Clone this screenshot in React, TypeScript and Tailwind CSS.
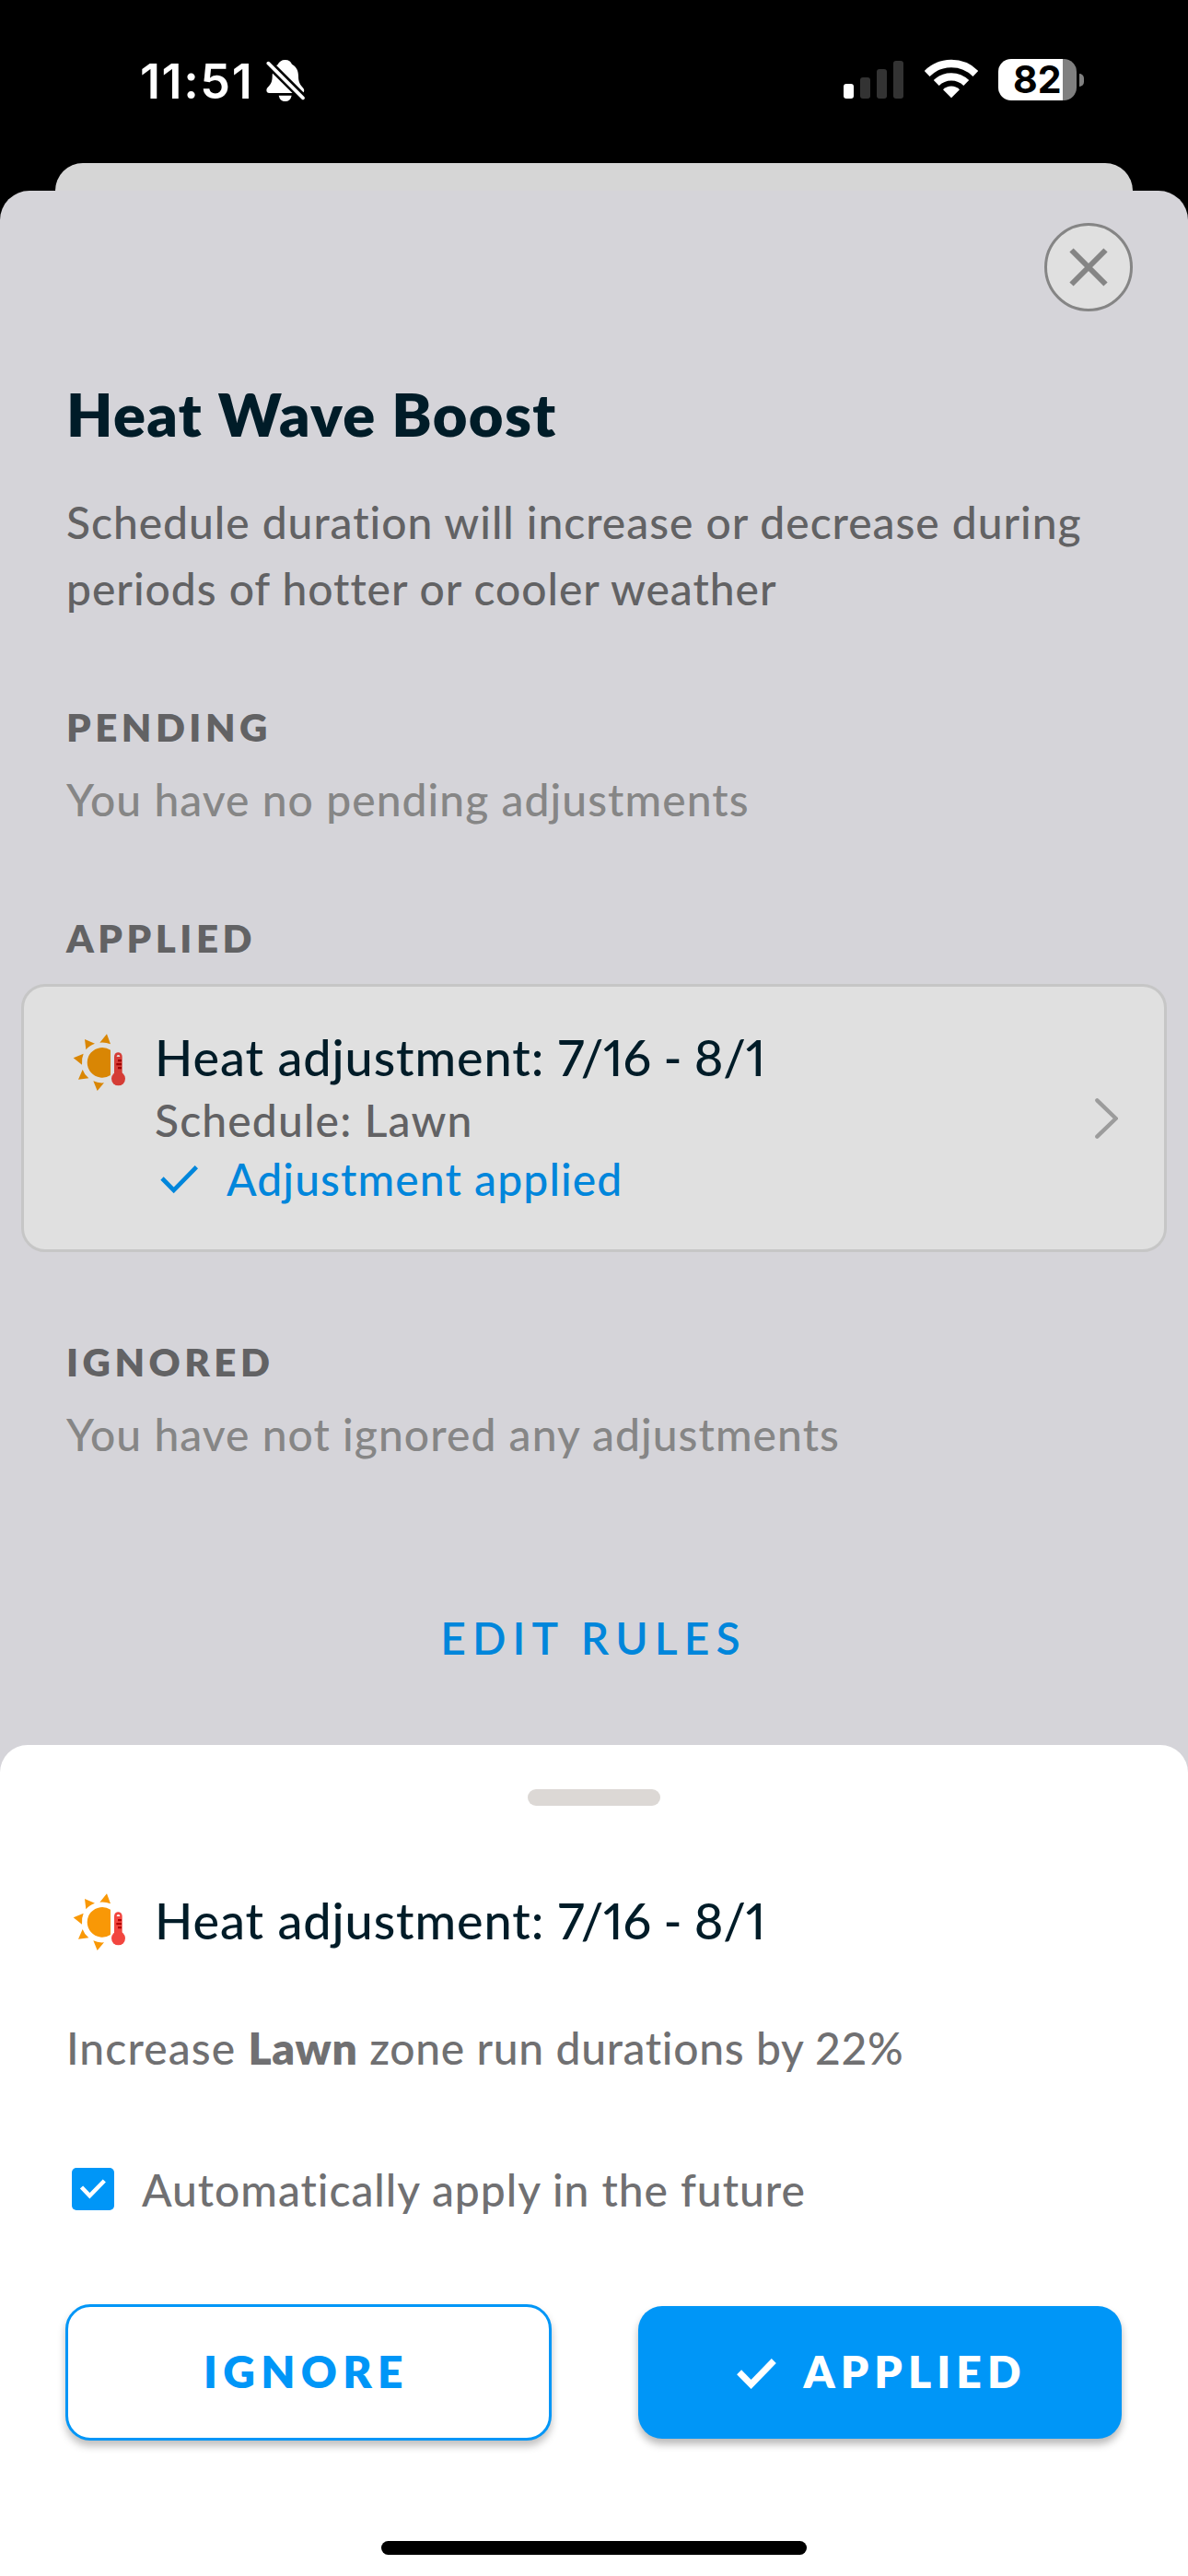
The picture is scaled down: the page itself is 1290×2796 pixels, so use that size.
import type { ReactNode } from "react";

function BellOff() {
  return (
    <svg className="h-[47px] w-[42px]" viewBox="866 74 126 141" fill="white">
      <path d="M928 77C916 77 908 83 904 92C892 100 886 115 886 130C886 150 880 157 870 168C864 176 868 185 876 185H982C990 185 992 176 987 169C977 157 971 150 971 130C971 108 962 98 950 91C946 82 940 77 928 77Z" />
      <path d="M907 193H949Q945 212 928 212Q911 212 907 193Z" />
      <path d="M860 75L1000 214" stroke="black" strokeWidth="27" />
      <path d="M873 88L986 201" stroke="white" strokeWidth="11" strokeLinecap="round" />
    </svg>
  );
}

function Wifi() {
  return (
    <svg className="h-[43px] w-[58px]" viewBox="431 74 174 129" fill="none" stroke="white" strokeWidth="25">
      <path d="M438.800 121.800A112 112 0 0 1 597.200 121.800" />
      <path d="M469.200 152.200A69 69 0 0 1 566.800 152.200" />
      <path d="M518 201L491 174A38.200 38.200 0 0 1 545 174Z" fill="white" stroke="none" />
    </svg>
  );
}

function StatusBar() {
  return (
    <header className="flex h-[177px] items-start justify-between pt-16 pr-[113px] pl-[152px] font-['Inter'] text-white">
      <div className="flex items-start">
        <span className="w-[137px] pt-[2px] text-[52px] leading-[45px] font-semibold tracking-[1.6px]">11:51</span>
        <BellOff />
      </div>
      <div className="flex items-start">
        <div className="flex h-[43px] items-end gap-[7px]">
          <i className="h-4 w-[11px] rounded-[3px] bg-white" />
          <i className="h-[23px] w-[11px] rounded-[3px] bg-[#333333]" />
          <i className="h-8 w-[11px] rounded-[3px] bg-[#333333]" />
          <i className="h-[41px] w-[11px] rounded-[3px] bg-[#333333]" />
        </div>
        <div className="ml-[23px]">
          <Wifi />
        </div>
        <div className="ml-[22px] flex items-center gap-[3px]">
          <div className="flex h-[45px] w-[85px] items-center rounded-[14px] bg-[linear-gradient(90deg,#fff_70px,#808080_70px)] pl-4 text-[41px] leading-[45px] font-bold text-black">
            82
          </div>
          <i className="h-[14px] w-[5px] rounded-r-full bg-[#808080]" />
        </div>
      </div>
    </header>
  );
}

function HeatIcon({ dim = false }: { dim?: boolean }) {
  const sun = dim ? "#d98604" : "#f99806";
  const red = dim ? "#d53d36" : "#f2463f";
  const mark = dim ? "#a00000" : "#b50000";
  return (
    <svg className="h-16 w-[60px] shrink-0" viewBox="234 182 180 192">
      <g fill={sun}>
        <path d="M360 238A49 49 0 1 0 360 320Z" />
        <path d="M348 186L325 214Q343 212 360 219Z" />
        <path d="M276 203L309 217Q291 223 280 237Z" />
        <path d="M239 264L272 250Q265 266 267 286Z" />
        <path d="M269 302L255 334L289 330Q275 319 269 302Z" />
        <path d="M304 339Q320 347 339 345L317 371Z" />
      </g>
      <rect x="372" y="246" width="26" height="90" rx="13" fill={red} />
      <circle cx="385.500" cy="331.500" r="22.500" fill={red} />
      <path d="M380 260A5.500 6 0 0 1 391 260Z" fill={dim ? "#e0e0e0" : "white"} />
      <path d="M384 269H396V276H384ZM379 281H396V288H379ZM384 293H396V300H384Z" fill={mark} />
    </svg>
  );
}

function AdjustmentTitle() {
  return (
    <h3 className="relative top-px text-[54px] leading-[66px] font-medium tracking-[0.9px] whitespace-nowrap text-[#001c28]">
      Heat adjustment: <span className="tracking-[-0.2px] proportional-nums">7/16 - 8/1</span>
    </h3>
  );
}

function Heading({ children }: { children: ReactNode }) {
  return (
    <h2 className="px-[72px] text-[42px] leading-[60px] font-extrabold tracking-[4.5px] text-[#626264]">{children}</h2>
  );
}

function Empty({ children }: { children: ReactNode }) {
  return (
    <p className="mt-[13px] px-[72px] text-[48px] leading-[72px] font-medium tracking-[1.05px] text-[#868686]">
      {children}
    </p>
  );
}

function AppliedCard() {
  return (
    <article className="mx-[23px] mt-5 flex h-[291px] items-start rounded-[26px] border-[3px] border-[#c6c6c6] bg-[#e0e0e0] pt-[43px] pr-[50px] pl-[52px]">
      <div className="pt-[7px]">
        <HeatIcon dim />
      </div>
      <div className="ml-[30px] flex-1">
        <AdjustmentTitle />
        <p className="mt-1 text-[48px] leading-[64px] font-medium tracking-[1.15px] text-[#626264]">Schedule: Lawn</p>
        <p className="flex items-center text-[48px] leading-[64px] font-medium tracking-[1.1px] text-[#0086db]">
          <svg className="ml-[6px] h-[34px] w-[42px]" viewBox="522 611 126 102" fill="none">
            <path d="M528 659L566 698L640 622" stroke="currentColor" strokeWidth="14" />
          </svg>
          <span className="ml-[30px]">Adjustment applied</span>
        </p>
      </div>
      <svg className="mt-[78px] h-[44px] w-[25px]" viewBox="569 397 75 132" fill="none">
        <path d="M576 404L637 463L576 522" stroke="#9c9c9c" strokeWidth="13" strokeLinecap="round" />
      </svg>
    </article>
  );
}

function BoostSheet() {
  return (
    <main className="h-[1687px] rounded-t-[32px] bg-[#d5d4d9]">
      <div className="flex justify-end pt-[35px] pr-[60px]">
        <button className="flex size-24 items-center justify-center rounded-full border-[3px] border-[#858585] bg-[#e0e0e0]">
          <svg className="size-[42px]" viewBox="0 0 42 42">
            <path d="M2.500 2.500L39.500 39.500M39.500 2.500L2.500 39.500" stroke="#858585" strokeWidth="6" />
          </svg>
        </button>
      </div>
      <h1 className="mt-[71px] px-[72px] text-[65px] leading-[80px] font-extrabold tracking-[1.4px] text-[#001c28]">
        Heat Wave Boost
      </h1>
      <p className="mt-[42px] px-[72px] text-[48px] leading-[72px] font-medium tracking-[0.96px] whitespace-nowrap text-[#626264]">
        Schedule duration will increase or decrease during
        <br />
        periods of hotter or cooler weather
      </p>
      <section className="mt-[84px]">
        <Heading>PENDING</Heading>
        <Empty>You have no pending adjustments</Empty>
      </section>
      <section className="mt-[84px]">
        <Heading>APPLIED</Heading>
        <AppliedCard />
      </section>
      <section className="mt-[89px]">
        <Heading>IGNORED</Heading>
        <Empty>You have not ignored any adjustments</Empty>
      </section>
      <button className="mt-[149px] block w-full pr-px text-center text-[48px] leading-[72px] font-semibold tracking-[7.1px] text-[#0086db]">
        EDIT RULES
      </button>
    </main>
  );
}

function AdjustmentSheet() {
  return (
    <div className="flex-1 bg-[#d5d4d9]">
      <section className="flex h-full flex-col rounded-t-[30px] bg-white px-[72px]">
        <i className="mt-12 h-[18px] w-36 self-center rounded-full bg-[#dcd8d5]" />
        <div className="mt-[91px] flex pl-[6px]">
          <div className="pt-[3px]">
            <HeatIcon />
          </div>
          <div className="ml-[30px]">
            <AdjustmentTitle />
          </div>
        </div>
        <p className="mt-[69px] h-[72px] text-[48px] leading-[72px] font-medium tracking-[0.65px] text-[#707072]">
          <span className="tracking-[1.1px]">Increase </span>
          <b className="leading-none font-extrabold">Lawn</b> zone run durations by 22%
        </p>
        <label className="mt-[81px] flex h-[72px] items-center pl-[6px] text-[48px] leading-[72px] font-medium tracking-[0.95px] text-[#707072]">
          <span className="size-[46px] rounded-[5px] bg-[#0096f7]">
            <svg className="size-[46px]" viewBox="0 0 46 46" fill="none">
              <path d="M10.500 21L19.400 30.300L35.300 14" stroke="white" strokeWidth="4.500" />
            </svg>
          </span>
          <span className="mt-px ml-[30px]">Automatically apply in the future</span>
        </label>
        <div className="mt-[89px] grid grid-cols-[527px_525px] justify-between">
          <button className="-ml-px flex h-[148px] items-center justify-center rounded-[27px] border-[3.5px] border-[#0096f7] bg-white pr-[5px] pb-[2px] text-[48px] leading-none font-extrabold tracking-[6.3px] text-[#0096f7] shadow-[0_6px_9px_rgba(0,0,0,0.25)]">
            IGNORE
          </button>
          <button className="mt-[2px] flex h-36 items-center justify-center rounded-[26px] bg-[#0096f7] pb-[2px] pl-1 text-[48px] leading-none font-extrabold tracking-[6.1px] text-white shadow-[0_6px_9px_rgba(0,0,0,0.28)]">
            <svg className="mt-[3px] mr-[29px] h-[34px] w-[43px]" viewBox="799 2557 43 34" fill="none">
              <path d="M801.600 2572.700L814.600 2586L839.300 2560.500" stroke="white" strokeWidth="7" />
            </svg>
            APPLIED
          </button>
        </div>
        <i className="mt-[109px] h-[15px] w-[462px] self-center rounded-full bg-black" />
      </section>
    </div>
  );
}

export default function App() {
  return (
    <div className="flex h-[2796px] w-[1290px] flex-col overflow-hidden bg-black font-['Lato',sans-serif]">
      <StatusBar />
      <div className="mx-[60px] h-[30px] rounded-t-[30px] bg-[#d6d6d6]" />
      <BoostSheet />
      <AdjustmentSheet />
    </div>
  );
}
